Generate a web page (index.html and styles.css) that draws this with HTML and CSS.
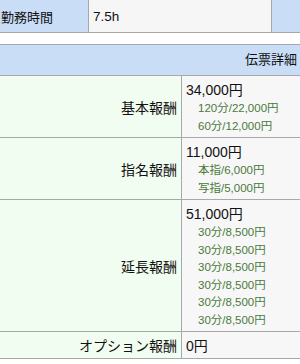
FILE: index.html
```html
<!DOCTYPE html>
<html lang="ja">
<head>
<meta charset="utf-8">
<link rel="stylesheet" href="styles.css">
</head>
<body>
<div class="summary">
  <div class="s-label">勤務時間</div>
  <div class="s-value">7.5h</div>
  <div class="s-extra"></div>
</div>
<div class="detail">
  <div class="d-head">伝票詳細</div>
  <div class="d-row">
    <div class="d-label">基本報酬</div>
    <div class="d-value">
      <div class="main">34,000円</div>
      <div class="sub">120分/22,000円</div>
      <div class="sub">60分/12,000円</div>
    </div>
  </div>
  <div class="d-row">
    <div class="d-label">指名報酬</div>
    <div class="d-value">
      <div class="main">11,000円</div>
      <div class="sub">本指/6,000円</div>
      <div class="sub">写指/5,000円</div>
    </div>
  </div>
  <div class="d-row">
    <div class="d-label">延長報酬</div>
    <div class="d-value">
      <div class="main">51,000円</div>
      <div class="sub">30分/8,500円</div>
      <div class="sub">30分/8,500円</div>
      <div class="sub">30分/8,500円</div>
      <div class="sub">30分/8,500円</div>
      <div class="sub">30分/8,500円</div>
      <div class="sub">30分/8,500円</div>
    </div>
  </div>
  <div class="d-row">
    <div class="d-label">オプション報酬</div>
    <div class="d-value">
      <div class="main">0円</div>
    </div>
  </div>
</div>
</body>
</html>
```

FILE: styles.css
```css
html, body {
  margin: 0;
  padding: 0;
  background: #ffffff;
}
body {
  font-family: "Liberation Sans", "Noto Sans CJK JP", sans-serif;
  font-size: 14px;
  color: #111111;
  width: 300px;
  overflow: hidden;
}
.summary {
  display: grid;
  grid-template-columns: 89px 183px 1fr;
  height: 32px;
  border-bottom: 1px solid #a8a8a8;
  font-size: 13.5px;
}
.s-label {
  background: #c9ddf6;
  border-right: 1px solid #a8a8a8;
  padding-left: 1px;
  display: flex;
  align-items: center;
  font-size: 13px;
}
.s-value {
  background: #f6f6f6;
  border-right: 1px solid #a8a8a8;
  padding-left: 4px;
  display: flex;
  align-items: center;
}
.s-extra {
  background: #c9ddf6;
}
.detail {
  margin-top: 11px;
  border-top: 1px solid #a8a8a8;
}
.d-head {
  background: #c9ddf6;
  height: 30px;
  line-height: 30px;
  text-align: right;
  padding-right: 3px;
  border-bottom: 1px solid #a8a8a8;
  font-size: 13px;
}
.d-row {
  display: grid;
  grid-template-columns: 182px 1fr;
  border-bottom: 1px solid #a8a8a8;
}
.d-label {
  background: #f1fdf0;
  border-right: 1px solid #a8a8a8;
  display: flex;
  align-items: center;
  justify-content: flex-end;
  padding-right: 4px;
}
.d-value {
  background: #f7f7f7;
  padding: 4px 4px 2px 4px;
}
.main {
  line-height: 20px;
}
.sub {
  font-size: 11.5px;
  line-height: 17.5px;
  color: #4a7a3a;
  padding-left: 12px;
}
```
